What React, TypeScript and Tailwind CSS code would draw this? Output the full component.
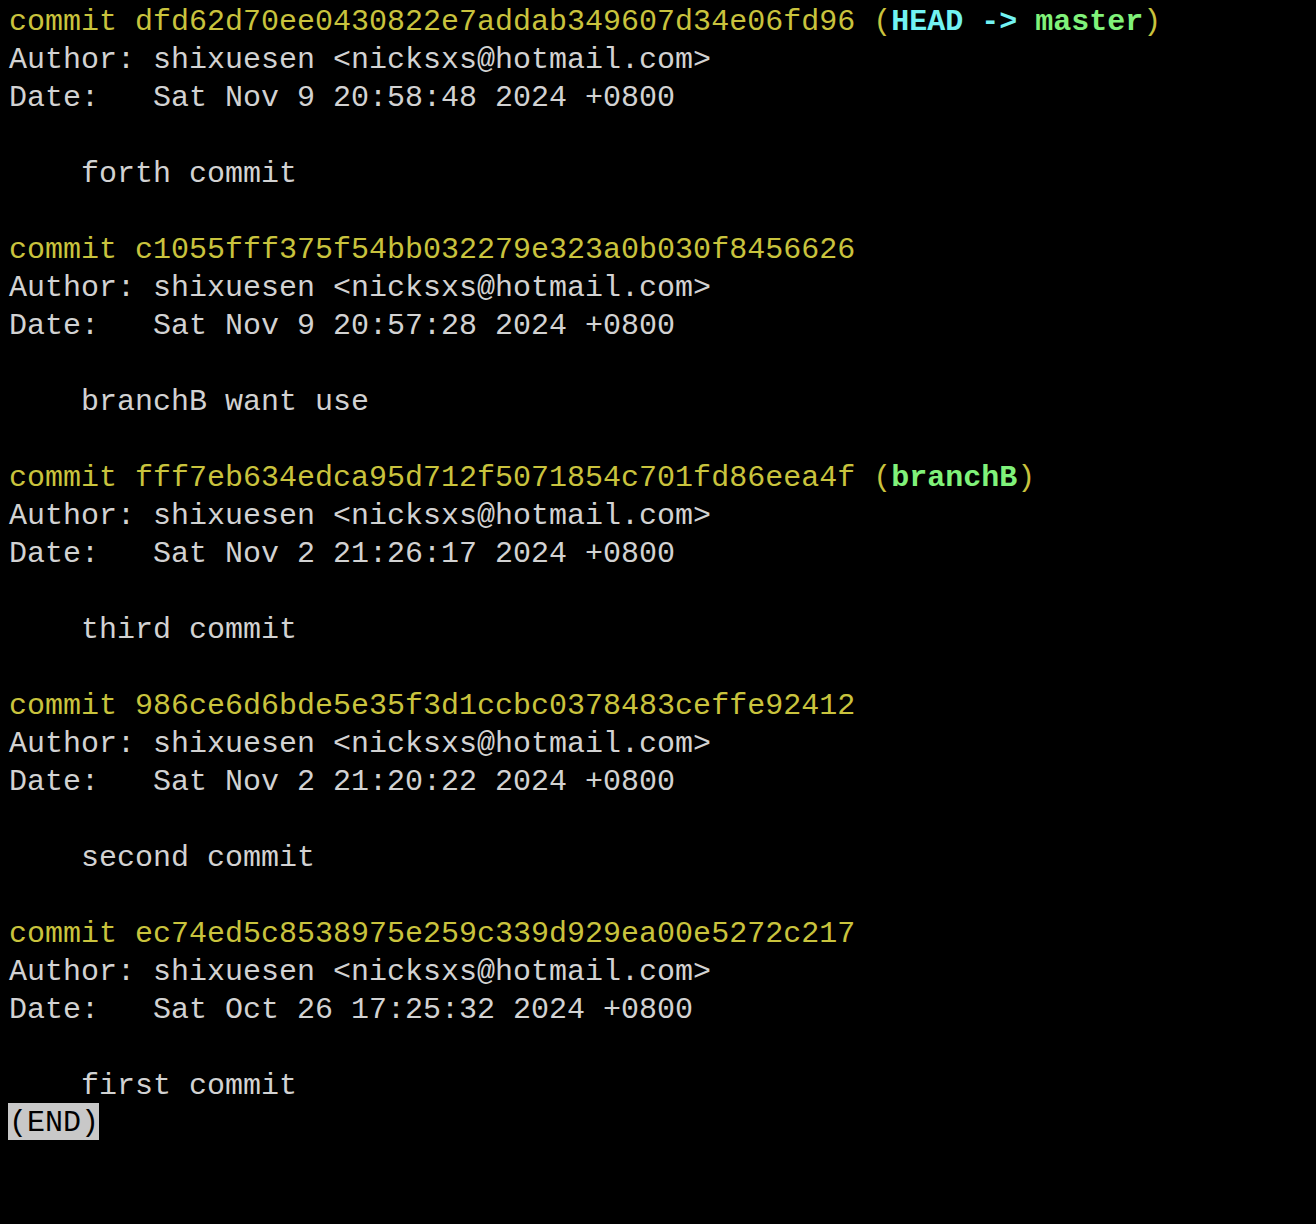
const yellow = "text-[#c9c33d]";

type Commit = {
  hash: string;
  refs?: "head" | "branchB";
  date: string;
  message: string;
};

const commits: Commit[] = [
  {
    hash: "dfd62d70ee0430822e7addab349607d34e06fd96",
    refs: "head",
    date: "Sat Nov 9 20:58:48 2024 +0800",
    message: "forth commit",
  },
  {
    hash: "c1055fff375f54bb032279e323a0b030f8456626",
    date: "Sat Nov 9 20:57:28 2024 +0800",
    message: "branchB want use",
  },
  {
    hash: "fff7eb634edca95d712f5071854c701fd86eea4f",
    refs: "branchB",
    date: "Sat Nov 2 21:26:17 2024 +0800",
    message: "third commit",
  },
  {
    hash: "986ce6d6bde5e35f3d1ccbc0378483ceffe92412",
    date: "Sat Nov 2 21:20:22 2024 +0800",
    message: "second commit",
  },
  {
    hash: "ec74ed5c8538975e259c339d929ea00e5272c217",
    date: "Sat Oct 26 17:25:32 2024 +0800",
    message: "first commit",
  },
];

const Line = ({ children }: { children?: React.ReactNode }) => (
  <div className="h-[38px] whitespace-pre">{children}</div>
);

const App = () => {
  return (
    <div className="min-h-[1224px] w-[1316px] bg-black pl-[9px] pt-[3px] font-['Liberation_Mono',monospace] text-[30px] leading-[38px] text-[#d2d2d2]">
      {commits.map((c, i) => (
        <div key={c.hash}>
          <Line>
            <span className={yellow}>commit {c.hash}</span>
            {c.refs === "head" && (
              <span className={yellow}>
                {" ("}
                <span className="font-bold text-[#72f2f2]">HEAD -&gt; </span>
                <span className="font-bold text-[#80f27a]">master</span>)
              </span>
            )}
            {c.refs === "branchB" && (
              <span className={yellow}>
                {" ("}
                <span className="font-bold text-[#80f27a]">branchB</span>)
              </span>
            )}
          </Line>
          <Line>Author: shixuesen &lt;nicksxs@hotmail.com&gt;</Line>
          <Line>Date:   {c.date}</Line>
          <Line />
          <Line>    {c.message}</Line>
          {i < commits.length - 1 && <Line />}
        </div>
      ))}
      {/* less pager prompt */}
      <div className="-mt-[2px] h-[38px]">
        <span className="-ml-px block h-[37px] w-fit bg-[#c8c8c8] pl-px leading-[41px] text-black">(END)</span>
      </div>
    </div>
  );
};

export default App;
